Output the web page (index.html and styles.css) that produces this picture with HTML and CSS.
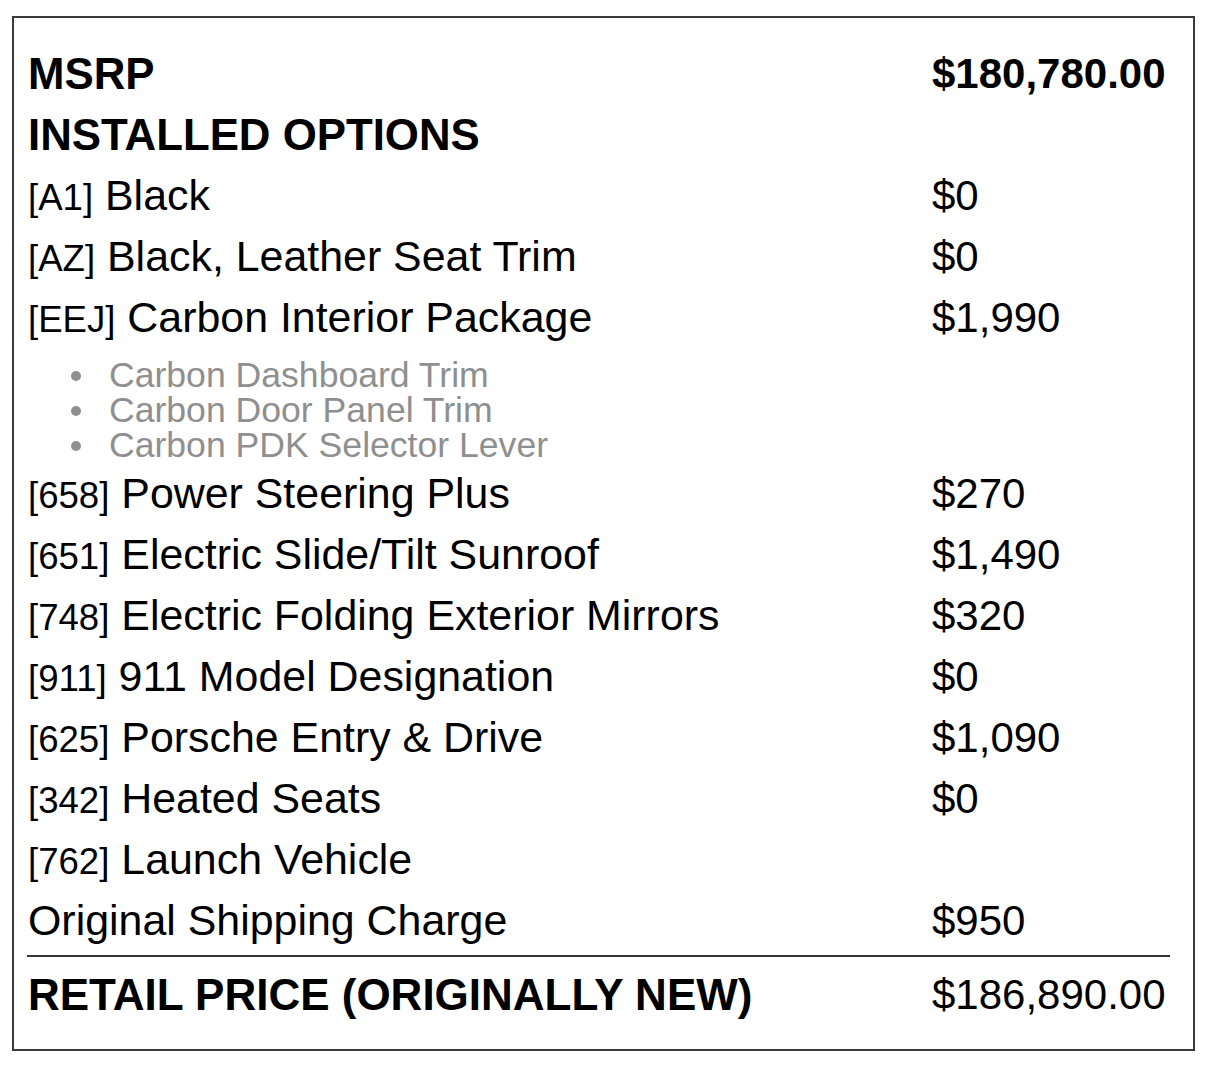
FILE: index.html
```html
<!DOCTYPE html>
<html lang="en">
<head>
<meta charset="utf-8">
<title>Window Sticker</title>
<link rel="stylesheet" href="styles.css">
</head>
<body>
<div class="sticker">
  <div class="row head"><span class="label">MSRP</span><span class="price">$180,780.00</span></div>
  <div class="row head"><span class="label">INSTALLED OPTIONS</span></div>
  <div class="row"><span class="label"><span class="code">[A1]</span> Black</span><span class="price">$0</span></div>
  <div class="row"><span class="label"><span class="code">[AZ]</span> Black, Leather Seat Trim</span><span class="price">$0</span></div>
  <div class="row"><span class="label"><span class="code">[EEJ]</span> Carbon Interior Package</span><span class="price">$1,990</span></div>
  <ul class="sub">
    <li>Carbon Dashboard Trim</li>
    <li>Carbon Door Panel Trim</li>
    <li>Carbon PDK Selector Lever</li>
  </ul>
  <div class="row"><span class="label"><span class="code">[658]</span> Power Steering Plus</span><span class="price">$270</span></div>
  <div class="row"><span class="label"><span class="code">[651]</span> Electric Slide/Tilt Sunroof</span><span class="price">$1,490</span></div>
  <div class="row"><span class="label"><span class="code">[748]</span> Electric Folding Exterior Mirrors</span><span class="price">$320</span></div>
  <div class="row"><span class="label"><span class="code">[911]</span> 911 Model Designation</span><span class="price">$0</span></div>
  <div class="row"><span class="label"><span class="code">[625]</span> Porsche Entry &amp; Drive</span><span class="price">$1,090</span></div>
  <div class="row"><span class="label"><span class="code">[342]</span> Heated Seats</span><span class="price">$0</span></div>
  <div class="row"><span class="label"><span class="code">[762]</span> Launch Vehicle</span></div>
  <div class="row"><span class="label">Original Shipping Charge</span><span class="price">$950</span></div>
  <div class="rule"></div>
  <div class="row total"><span class="label">RETAIL PRICE (ORIGINALLY NEW)</span><span class="price">$186,890.00</span></div>
</div>
</body>
</html>
```
FILE: styles.css
```css
html, body {
  margin: 0;
  padding: 0;
  background: #fff;
}
body {
  font-family: "Liberation Sans", Arial, sans-serif;
  color: #000;
}
.sticker {
  box-sizing: border-box;
  width: 1183px;
  margin: 16px 0 21px 12px;
  border: 2px solid #3a3a3a;
  padding: 25px 23px 24px 13px;
}
.row {
  display: grid;
  grid-template-columns: 905px 1fr;
  height: 61px;
  line-height: 61px;
  font-size: 42.9px;
  white-space: nowrap;
}
.row .price {
  font-size: 42px;
}
.row .label {
  padding-left: 1px;
}
.code {
  font-size: 36.6px;
}
.head {
  font-weight: bold;
}
.head .label {
  font-size: 43.8px;
}
.sub {
  list-style: none;
  margin: 10px 0 0;
  padding: 0 0 0 44px;
  color: #8f8f8f;
  font-size: 35.6px;
  line-height: 35px;
}
.sub li {
  display: flex;
  align-items: center;
  white-space: nowrap;
}
.sub li::before {
  content: "";
  width: 10px;
  height: 10px;
  border-radius: 50%;
  background: #8f8f8f;
  margin-right: 28px;
  flex: none;
}
.rule {
  height: 2px;
  margin-top: 4px;
  background: #333;
}
.total {
  margin-top: 7px;
}
.total .label {
  font-weight: bold;
  font-size: 44px;
}
```
